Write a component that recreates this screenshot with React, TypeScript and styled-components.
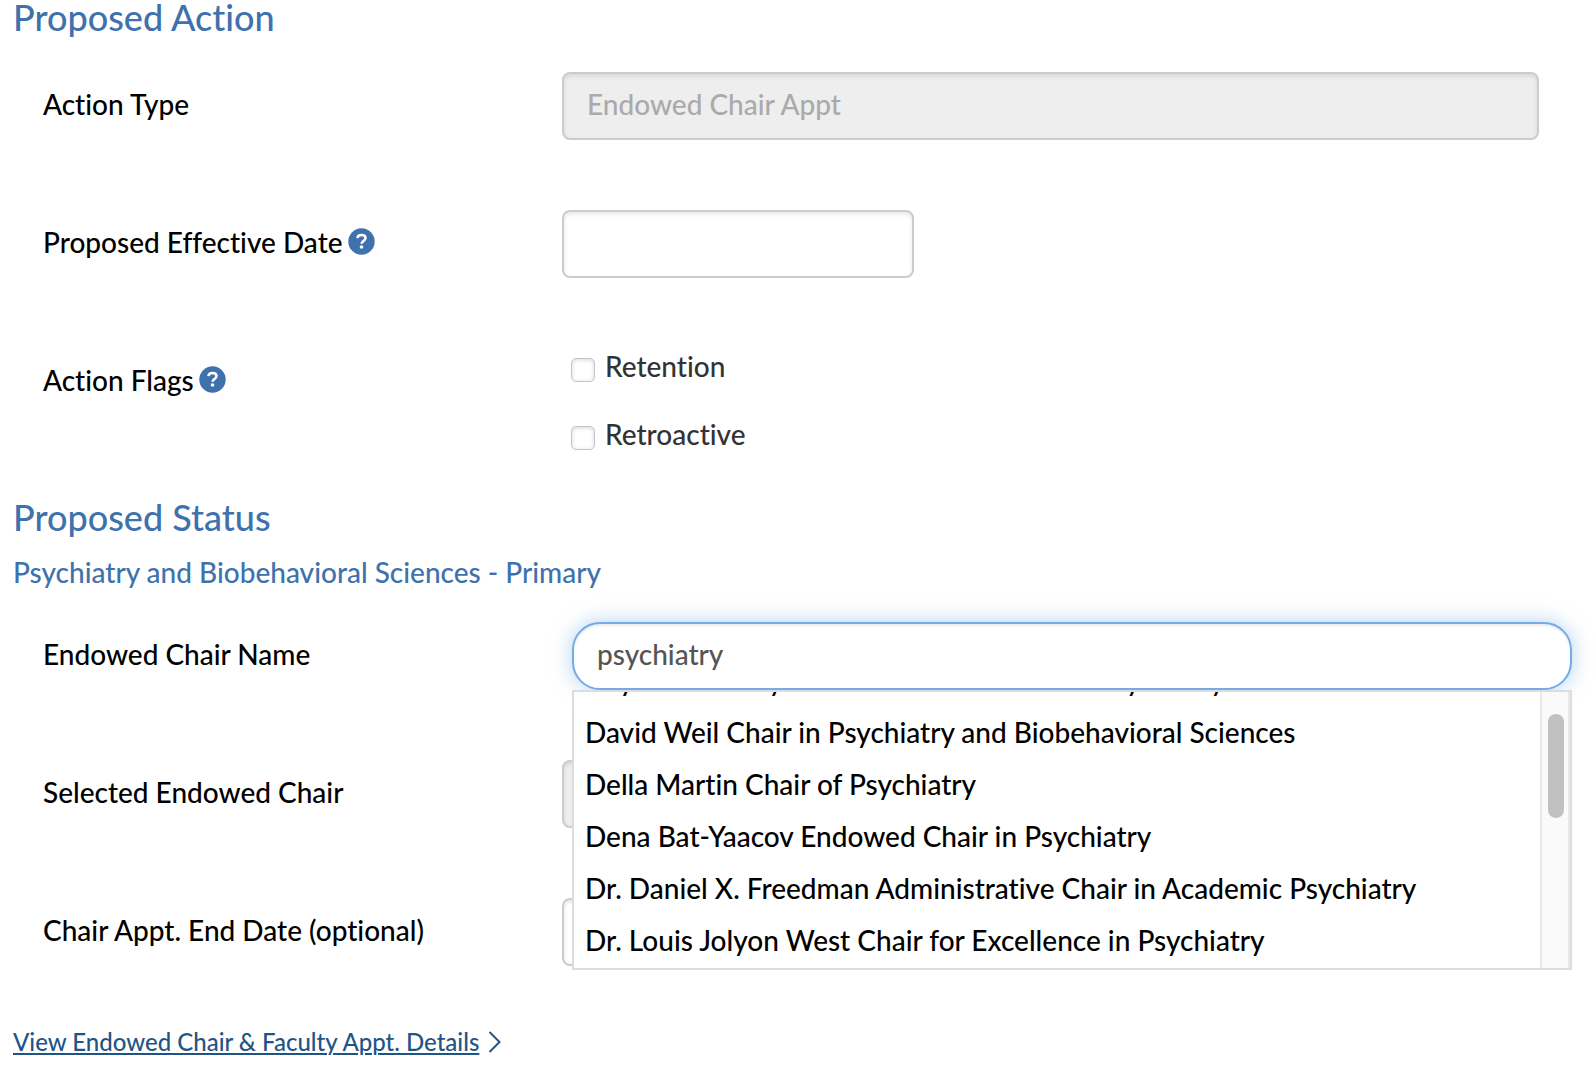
import React, { useState } from "react";
import styled, { createGlobalStyle, css } from "styled-components";

const blue = "#3f72ad";

const GlobalStyle = createGlobalStyle`
  *, *::before, *::after { box-sizing: border-box; }
  body {
    margin: 0;
    background: #fff;
    color: #000;
    font-family: Lato, "Liberation Sans", sans-serif;
    font-size: 28px;
    font-weight: 500;
    font-variant-ligatures: none;
  }
`;

const Page = styled.main`
  padding: 0 24px 32px 13px;
`;

const SectionTitle = styled.h2`
  margin: 0;
  font-size: 36px;
  line-height: 34px;
  font-weight: 500;
  color: ${blue};
`;

const SubTitle = styled.h3`
  margin: 21px 0 0;
  font-size: 28px;
  line-height: 34px;
  font-weight: 500;
  color: ${blue};
`;

const Fields = styled.div<{ $top: number; $bottom: number }>`
  display: flex;
  flex-direction: column;
  gap: 70px;
  padding: ${(p) => p.$top}px 0 ${(p) => p.$bottom}px 30px;
`;

const Row = styled.div`
  display: grid;
  grid-template-columns: 519px minmax(0, 1fr);
  align-items: start;
`;

const LabelCell = styled.div`
  display: flex;
  align-items: center;
  gap: 5px;
  line-height: 64px;
`;

const HelpButton = styled.button`
  display: flex;
  padding: 0 0 2px;
  border: 0;
  background: none;
  cursor: pointer;
`;

const FieldCell = styled.div`
  padding-right: 33px;
`;

const ComboCell = styled.div`
  position: relative;
  margin-left: 10px;
`;

const TextInput = styled.input<{ $short?: boolean; $search?: boolean }>`
  display: block;
  width: ${(p) => (p.$short ? "352px" : "100%")};
  height: 68px;
  padding: 0 23px 4px;
  border: 2px solid #ccc;
  border-radius: 8px;
  outline: 0;
  background: #fff;
  box-shadow: inset 0 2px 4px rgba(0, 0, 0, 0.1);
  font: inherit;
  color: #555;

  &:disabled {
    background: #eee;
    color: #aaa;
  }

  ${(p) =>
    p.$search &&
    css`
      border-color: #75abe6;
      border-radius: 28px;
      box-shadow: inset 0 2px 2px rgba(0, 0, 0, 0.075),
        0 0 20px rgba(102, 165, 230, 0.5);
    `}
`;

const Options = styled.div`
  display: flex;
  flex-direction: column;
  gap: 32px;
  padding-left: 9px;
`;

const Option = styled.label`
  display: flex;
  align-items: flex-start;
  gap: 10px;
  line-height: 36px;
  color: #333;
`;

const Checkbox = styled.input`
  appearance: none;
  width: 24px;
  height: 24px;
  margin: 10px 0 0;
  border: 1px solid #c4c4c4;
  border-radius: 5px;
  background: #fff;
  box-shadow: inset 0 1px 4px rgba(0, 0, 0, 0.16);

  &:checked {
    background: ${blue};
  }
`;

const Dropdown = styled.div`
  position: absolute;
  z-index: 1;
  top: 100%;
  left: 0;
  right: 0;
  display: flex;
  height: 280px;
  border: 2px solid #ddd;
  background: #fff;
`;

const Choices = styled.ul`
  flex: 1;
  display: flex;
  flex-direction: column;
  justify-content: flex-end;
  margin: 0;
  padding: 0 11px 2px;
  overflow: hidden;
  list-style: none;
`;

const Choice = styled.li`
  flex: none;
  line-height: 52px;
  white-space: nowrap;
`;

const ScrollTrack = styled.div`
  width: 30px;
  padding: 22px 4px 0 6px;
  border: solid #e8e8e8;
  border-width: 0 2px;
  background: #fafafa;
`;

const ScrollThumb = styled.div`
  width: 16px;
  height: 104px;
  border-radius: 8px;
  background: #c1c1c1;
`;

const DetailsLink = styled.a`
  display: inline-flex;
  align-items: center;
  gap: 9px;
  font-size: 24px;
  line-height: 32px;
  color: #1f5586;
  text-decoration: none;
`;

const LinkText = styled.span`
  text-decoration: underline;
  text-decoration-thickness: 2px;
  text-underline-offset: 2px;
`;

const Help = ({ topic }: { topic: string }) => (
  <HelpButton type="button" aria-label={`Help: ${topic}`}>
    <svg width="27" height="27" viewBox="0 0 27 27" fill="none">
      <circle cx="13.5" cy="13.5" r="13.2" fill={blue} />
      <path
        d="M9.4 10.2C9.6 8 11.2 6.9 13.5 6.9c2.4 0 4 1.2 4 3.2 0 3-3.9 2.9-3.9 5.7"
        stroke="#fff"
        strokeWidth="2.5"
      />
      <circle cx="13.5" cy="19" r="1.8" fill="#fff" />
    </svg>
  </HelpButton>
);

const chairs = [
  "Day and Stanley Foster Endowed Chair in Psychiatry",
  "David Weil Chair in Psychiatry and Biobehavioral Sciences",
  "Della Martin Chair of Psychiatry",
  "Dena Bat-Yaacov Endowed Chair in Psychiatry",
  "Dr. Daniel X. Freedman Administrative Chair in Academic Psychiatry",
  "Dr. Louis Jolyon West Chair for Excellence in Psychiatry",
];

export default function App() {
  const [query, setQuery] = useState("psychiatry");

  return (
    <>
      <GlobalStyle />
      <Page>
        <SectionTitle>Proposed Action</SectionTitle>
        <Fields $top={38} $bottom={48}>
          <Row>
            <LabelCell>
              <label htmlFor="action-type">Action Type</label>
            </LabelCell>
            <FieldCell>
              <TextInput id="action-type" disabled value="Endowed Chair Appt" />
            </FieldCell>
          </Row>
          <Row>
            <LabelCell>
              <label htmlFor="effective-date">Proposed Effective Date</label>
              <Help topic="Proposed Effective Date" />
            </LabelCell>
            <FieldCell>
              <TextInput id="effective-date" $short />
            </FieldCell>
          </Row>
          <Row role="group" aria-labelledby="flags-label">
            <LabelCell>
              <span id="flags-label">Action Flags</span>
              <Help topic="Action Flags" />
            </LabelCell>
            <Options>
              <Option>
                <Checkbox type="checkbox" />
                Retention
              </Option>
              <Option>
                <Checkbox type="checkbox" />
                Retroactive
              </Option>
            </Options>
          </Row>
        </Fields>

        <SectionTitle>Proposed Status</SectionTitle>
        <SubTitle>Psychiatry and Biobehavioral Sciences - Primary</SubTitle>
        <Fields $top={33} $bottom={57}>
          <Row>
            <LabelCell>
              <label htmlFor="chair-name">Endowed Chair Name</label>
            </LabelCell>
            <ComboCell>
              <TextInput
                id="chair-name"
                $search
                value={query}
                onChange={(e) => setQuery(e.target.value)}
              />
              <Dropdown>
                <Choices>
                  {chairs.map((name) => (
                    <Choice key={name}>{name}</Choice>
                  ))}
                </Choices>
                <ScrollTrack>
                  <ScrollThumb />
                </ScrollTrack>
              </Dropdown>
            </ComboCell>
          </Row>
          <Row>
            <LabelCell>
              <label htmlFor="selected-chair">Selected Endowed Chair</label>
            </LabelCell>
            <FieldCell>
              <TextInput id="selected-chair" disabled />
            </FieldCell>
          </Row>
          <Row>
            <LabelCell>
              <label htmlFor="end-date">Chair Appt. End Date (optional)</label>
            </LabelCell>
            <FieldCell>
              <TextInput id="end-date" $short />
            </FieldCell>
          </Row>
        </Fields>

        <DetailsLink href="#details">
          <LinkText>View Endowed Chair &amp; Faculty Appt. Details</LinkText>
          <svg width="13" height="22" viewBox="0 0 13 22" fill="none">
            <path d="M1.5 1 11.5 11 1.5 21" stroke="currentColor" strokeWidth="2" />
          </svg>
        </DetailsLink>
      </Page>
    </>
  );
}
